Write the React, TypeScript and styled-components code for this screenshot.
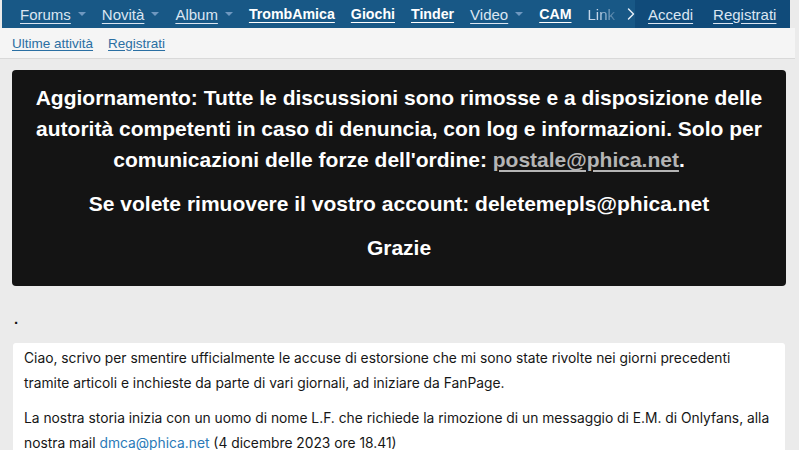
import React from 'react';
import styled, { createGlobalStyle } from 'styled-components';
import { ChevronRight } from 'lucide-react';

const GlobalStyle = createGlobalStyle`
  html, body {
    margin: 0;
    padding: 0;
    background: #ebebeb;
    font-family: "Liberation Sans", Arial, sans-serif;
    overflow: hidden;
  }
`;

const Page = styled.div`
  width: 799px;
  height: 450px;
  overflow: hidden;
`;

const NavBar = styled.nav`
  display: flex;
  align-items: center;
  height: 28px;
  margin: 0 9px 0 2px;
  padding-left: 18px;
  background: #185886;
  font-size: 15px;
`;

const NavItem = styled.a<{ $bold?: boolean; $fade?: boolean }>`
  display: flex;
  align-items: center;
  flex-shrink: 0;
  gap: 7px;
  margin-right: ${(p) => (p.$fade ? 0 : 16)}px;
  color: ${(p) => (p.$bold ? '#ffffff' : '#dbe6f2')};
  font-weight: ${(p) => (p.$bold ? 700 : 400)};
  font-size: ${(p) => (p.$bold ? '14.2px' : '15px')};
  white-space: nowrap;
  span {
    text-decoration: ${(p) => (p.$fade ? 'none' : 'underline')};
    text-underline-offset: 3px;
    text-decoration-thickness: 1px;
  }
  ${(p) =>
    p.$fade &&
    `-webkit-mask-image: linear-gradient(to right, #000 40%, rgba(0,0,0,0.25) 100%);
     mask-image: linear-gradient(to right, #000 40%, rgba(0,0,0,0.25) 100%);
     color: #c3d5e8;`}
`;

const Caret = styled.i`
  display: inline-block;
  width: 0;
  height: 0;
  border-left: 4px solid transparent;
  border-right: 4px solid transparent;
  border-top: 4px solid #6f98c0;
`;

const Arrow = styled.div`
  display: flex;
  align-items: center;
  flex-shrink: 0;
  color: #e6eef7;
  margin: 0 -6px 0 6px;
`;

const AuthZone = styled.div`
  display: flex;
  align-items: center;
  flex-shrink: 0;
  gap: 20px;
  height: 100%;
  margin-left: auto;
  padding: 0 14px 0 13px;
  background: #104b7a;
`;

const AuthLink = styled.a`
  color: #dbe6f2;
  text-decoration: underline;
  text-underline-offset: 3px;
`;

const SubNav = styled.div`
  display: flex;
  align-items: center;
  gap: 15px;
  height: 30px;
  margin-right: 4px;
  padding-left: 12px;
  background: #f5f5f5;
  border-bottom: 1px solid #d9d9d9;
  font-size: 13.5px;
`;

const SubLink = styled.a`
  color: #2a6fa3;
  text-decoration: underline;
  text-underline-offset: 2px;
`;

const Main = styled.main`
  padding: 11px 13px 0 12px;
`;

const Notice = styled.div`
  background: #141414;
  border-radius: 4px;
  padding: 12px 16px 23px;
  color: #ffffff;
  font-weight: 700;
  font-size: 21px;
  line-height: 31px;
  text-align: center;
`;

const NoticePara = styled.p`
  margin: 0 0 13px;
  &:last-child {
    margin-bottom: 0;
  }
`;

const NoticeLink = styled.a`
  color: #b5b5b5;
  text-decoration: underline;
  text-underline-offset: 3px;
`;

const Dot = styled.div`
  height: 57px;
  padding: 24px 0 0 2px;
  box-sizing: border-box;
  font-size: 15px;
  font-weight: 700;
  color: #141414;
`;

const PostBody = styled.div`
  margin-left: 1px;
  margin-right: 1px;
  background: #ffffff;
  border-radius: 3px;
  padding: 3px 11px 0;
  font-family: Inter, "Liberation Sans", sans-serif;
  font-size: 13.8px;
  line-height: 25px;
  color: #161616;
  white-space: nowrap;
`;

const PostPara = styled.p`
  margin: 0 0 10px;
`;

const PostLink = styled.a`
  color: #2a7ab8;
  text-decoration: none;
`;

const navItems = [
  { label: 'Forums', caret: true },
  { label: 'Novità', caret: true },
  { label: 'Album', caret: true },
  { label: 'TrombAmica', bold: true },
  { label: 'Giochi', bold: true },
  { label: 'Tinder', bold: true },
  { label: 'Video', caret: true },
  { label: 'CAM', bold: true },
  { label: 'Link', fade: true },
];

const App: React.FC = () => {
  return (
    <Page>
      <GlobalStyle />
      <NavBar>
        {navItems.map((item) => (
          <NavItem key={item.label} $bold={item.bold} $fade={item.fade}>
            <span>{item.label}</span>
            {item.caret && <Caret />}
          </NavItem>
        ))}
        <Arrow>
          <ChevronRight size={20} strokeWidth={1.7} />
        </Arrow>
        <AuthZone>
          <AuthLink>Accedi</AuthLink>
          <AuthLink>Registrati</AuthLink>
        </AuthZone>
      </NavBar>
      <SubNav>
        <SubLink>Ultime attività</SubLink>
        <SubLink>Registrati</SubLink>
      </SubNav>
      <Main>
        <Notice>
          <NoticePara>
            Aggiornamento: Tutte le discussioni sono rimosse e a disposizione delle
            autorità competenti in caso di denuncia, con log e informazioni. Solo per
            comunicazioni delle forze dell'ordine: <NoticeLink>postale@phica.net</NoticeLink>.
          </NoticePara>
          <NoticePara>Se volete rimuovere il vostro account: deletemepls@phica.net</NoticePara>
          <NoticePara>Grazie</NoticePara>
        </Notice>
        <Dot>.</Dot>
        <PostBody>
          <PostPara>
            Ciao, scrivo per smentire ufficialmente le accuse di estorsione che mi sono state rivolte nei giorni precedenti
            <br />
            tramite articoli e inchieste da parte di vari giornali, ad iniziare da FanPage.
          </PostPara>
          <PostPara>
            La nostra storia inizia con un uomo di nome L.F. che richiede la rimozione di un messaggio di E.M. di Onlyfans, alla
            <br />
            nostra mail <PostLink>dmca@phica.net</PostLink> (4 dicembre 2023 ore 18.41)
          </PostPara>
        </PostBody>
      </Main>
    </Page>
  );
};

export default App;
